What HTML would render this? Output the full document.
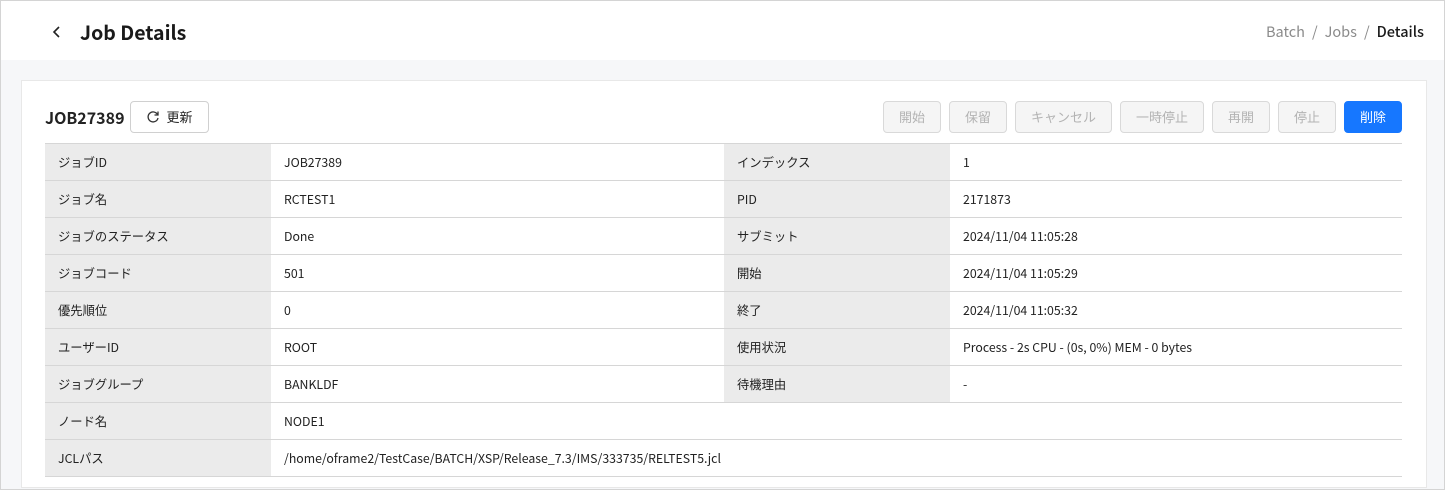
<!DOCTYPE html>
<html><head><meta charset="utf-8"><style>
*{box-sizing:border-box;margin:0;padding:0}
body{width:1445px;height:490px;overflow:hidden;background:#f6f7f9;font-family:"Noto Sans CJK JP","Liberation Sans",sans-serif;color:#222;position:relative}
.frame{position:absolute;left:0;top:0;width:1445px;height:490px;border:1px solid #d4d4d4;pointer-events:none}
.hdr{position:absolute;left:0;top:0;width:1445px;height:60px;background:#fff}
.back{position:absolute;left:41px;top:17px;width:30px;height:30px}
.title{position:absolute;left:80px;top:15px;font-size:19.5px;font-weight:700;line-height:34px;color:#1a1a1a}
.bc{position:absolute;right:21px;top:21px;font-size:14.5px;color:#8a8a8a;line-height:22px}
.bc b{color:#1a1a1a;font-weight:500}
.bc span{margin:0 7px}
.card{position:absolute;left:21px;top:80px;width:1406px;height:408px;background:#fff;border:1px solid #e8e8e8}
.job{position:absolute;left:45px;top:105px;font-size:16px;font-weight:700;line-height:24px}
.btn{position:absolute;top:101px;height:32px;border-radius:4px;font-size:13px;line-height:30px;text-align:center;border:1px solid #d9d9d9;background:#f5f5f5;color:#b3b3b3}
.ref{left:130px;width:79px;background:#fff;color:#222;border-color:#d0d0d0}
.del{background:#1677ff;border-color:#1677ff;color:#fff}
table{position:absolute;left:45px;top:143px;width:1357px;border-collapse:collapse;font-size:12.3px}
td{height:37px;border-top:1px solid #d6d6d6;border-bottom:1px solid #d6d6d6;padding:0 13px 1px;vertical-align:middle}
td.l{background:#ebebeb;width:226px}
td.v1{width:453px}
</style></head><body>
<div class="hdr"></div>
<svg class="back" viewBox="0 0 30 30"><path d="M18 10l-5 5 5 5" fill="none" stroke="#222" stroke-width="1.6"/></svg>
<div class="title">Job Details</div>
<div class="bc">Batch<span>/</span>Jobs<span>/</span><b>Details</b></div>
<div class="card"></div>
<div class="job">JOB27389</div>
<div class="btn ref"><svg width="14" height="14" viewBox="0 0 14 14" style="vertical-align:-2px;margin-right:6px"><path d="M11.5 4.5A5 5 0 1 0 12 8" fill="none" stroke="#333" stroke-width="1.3"/><path d="M12 1.5v3.5h-3.5" fill="none" stroke="#333" stroke-width="1.3"/></svg>更新</div>
<div class="btn" style="left:883px;width:58px">開始</div>
<div class="btn" style="left:949px;width:58px">保留</div>
<div class="btn" style="left:1015px;width:97px">キャンセル</div>
<div class="btn" style="left:1120px;width:84px">一時停止</div>
<div class="btn" style="left:1212px;width:58px">再開</div>
<div class="btn" style="left:1278px;width:58px">停止</div>
<div class="btn del" style="left:1344px;width:58px">削除</div>
<table>
<tr><td class="l">ジョブID</td><td class="v1">JOB27389</td><td class="l">インデックス</td><td>1</td></tr>
<tr><td class="l">ジョブ名</td><td class="v1">RCTEST1</td><td class="l">PID</td><td>2171873</td></tr>
<tr><td class="l">ジョブのステータス</td><td class="v1">Done</td><td class="l">サブミット</td><td>2024/11/04 11:05:28</td></tr>
<tr><td class="l">ジョブコード</td><td class="v1">501</td><td class="l">開始</td><td>2024/11/04 11:05:29</td></tr>
<tr><td class="l">優先順位</td><td class="v1">0</td><td class="l">終了</td><td>2024/11/04 11:05:32</td></tr>
<tr><td class="l">ユーザーID</td><td class="v1">ROOT</td><td class="l">使用状況</td><td>Process - 2s CPU - (0s, 0%) MEM - 0 bytes</td></tr>
<tr><td class="l">ジョブグループ</td><td class="v1">BANKLDF</td><td class="l">待機理由</td><td>-</td></tr>
<tr><td class="l">ノード名</td><td colspan="3">NODE1</td></tr>
<tr><td class="l">JCLパス</td><td colspan="3">/home/oframe2/TestCase/BATCH/XSP/Release_7.3/IMS/333735/RELTEST5.jcl</td></tr>
</table>
<div class="frame"></div>
</body></html>
